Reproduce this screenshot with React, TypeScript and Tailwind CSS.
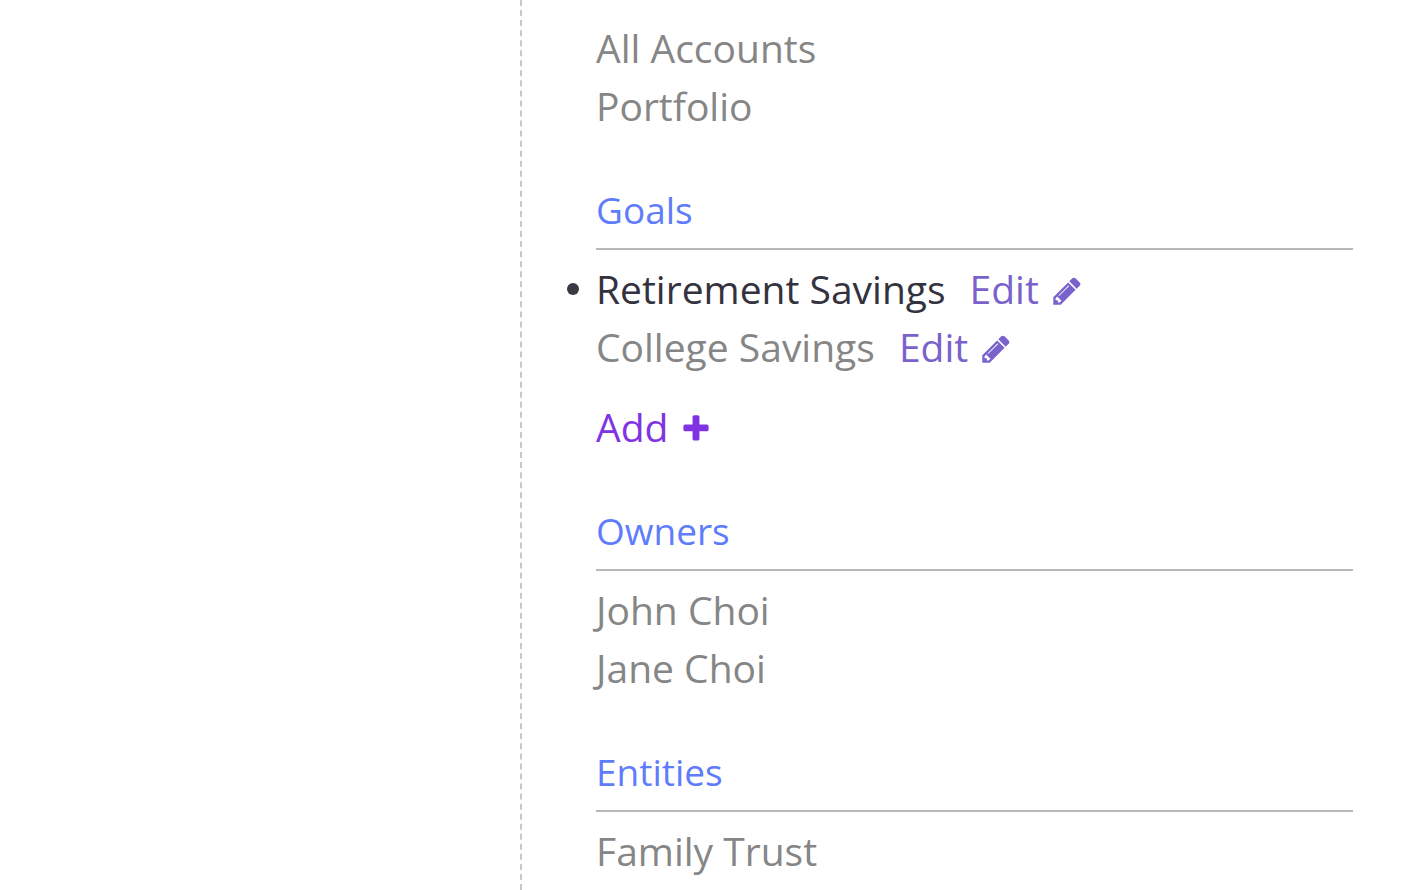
import React from "react";

interface Item {
    name: string;
    active?: boolean;
    editable?: boolean;
}

interface SectionProps {
    title: string;
    items: Item[];
    addable?: boolean;
}

function PencilIcon() {
    return (
        <svg viewBox="0 0 1792 1792" fill="currentColor" className="mt-1 size-8" aria-hidden="true">
            <path d="M491 1536l91-91-235-235-91 91v107h128v128h107zm523-928q0-22-22-22-10 0-17 7l-542 542q-7 7-7 17 0 22 22 22 10 0 17-7l542-542q7-7 7-17zm-54-192l416 416-832 832h-416v-416zm683 96q0 53-37 90l-166 166-416-416 166-165q36-38 90-38 53 0 91 38l235 234q37 39 37 91z" />
        </svg>
    );
}

function PlusIcon() {
    return (
        <svg viewBox="0 0 1792 1792" fill="currentColor" className="mt-1 size-8" aria-hidden="true">
            <path d="M1600 736v192q0 40-28 68t-68 28h-416v416q0 40-28 68t-68 28h-192q-40 0-68-28t-28-68v-416h-416q-40 0-68-28t-28-68v-192q0-40 28-68t68-28h416v-416q0-40 28-68t68-28h192q40 0 68 28t28 68v416h416q40 0 68 28t28 68z" />
        </svg>
    );
}

function ItemRow({ name, active, editable }: Item) {
    return (
        <li className="relative flex items-center">
            {active && <span className="absolute -left-[29px] top-[23px] size-3 rounded-full bg-[#3a3944]" />}
            <a href="#" className={active ? "text-[#33323e]" : "text-[#868686]"}>{name}</a>
            {editable && (
                <button type="button" aria-label={`Edit ${name}`} className="ml-6 flex items-center gap-3 text-[#7a62cc]">
                    Edit <PencilIcon />
                </button>
            )}
        </li>
    );
}

function Section({ title, items, addable }: SectionProps) {
    return (
        <section className="mt-[46px]">
            <h2 className="mb-[10px] border-b-2 border-[#b8b8b8] pb-[9px] text-[37px] leading-[58px] text-[#5f7cfa]">{title}</h2>
            <ul>
                {items.map((item) => <ItemRow key={item.name} {...item} />)}
            </ul>
            {addable && (
                <button type="button" className="mt-[22px] flex items-center gap-3 text-[#8033e2]">
                    Add <PlusIcon />
                </button>
            )}
        </section>
    );
}

export default function App() {
    return (
        <div className="flex min-h-screen bg-white font-['Open_Sans',sans-serif] text-[39px] leading-[58px]">
            <div className="w-[520px] shrink-0" />
            <nav className="grow border-l-2 border-dashed border-[#c8c8c8] pt-[19px] pr-[71px] pl-[74px]">
                <ul>
                    <ItemRow name="All Accounts" />
                    <ItemRow name="Portfolio" />
                </ul>
                <Section
                    title="Goals"
                    addable
                    items={[
                        { name: "Retirement Savings", active: true, editable: true },
                        { name: "College Savings", editable: true },
                    ]}
                />
                <Section title="Owners" items={[{ name: "John Choi" }, { name: "Jane Choi" }]} />
                <Section title="Entities" items={[{ name: "Family Trust" }]} />
            </nav>
        </div>
    );
}
